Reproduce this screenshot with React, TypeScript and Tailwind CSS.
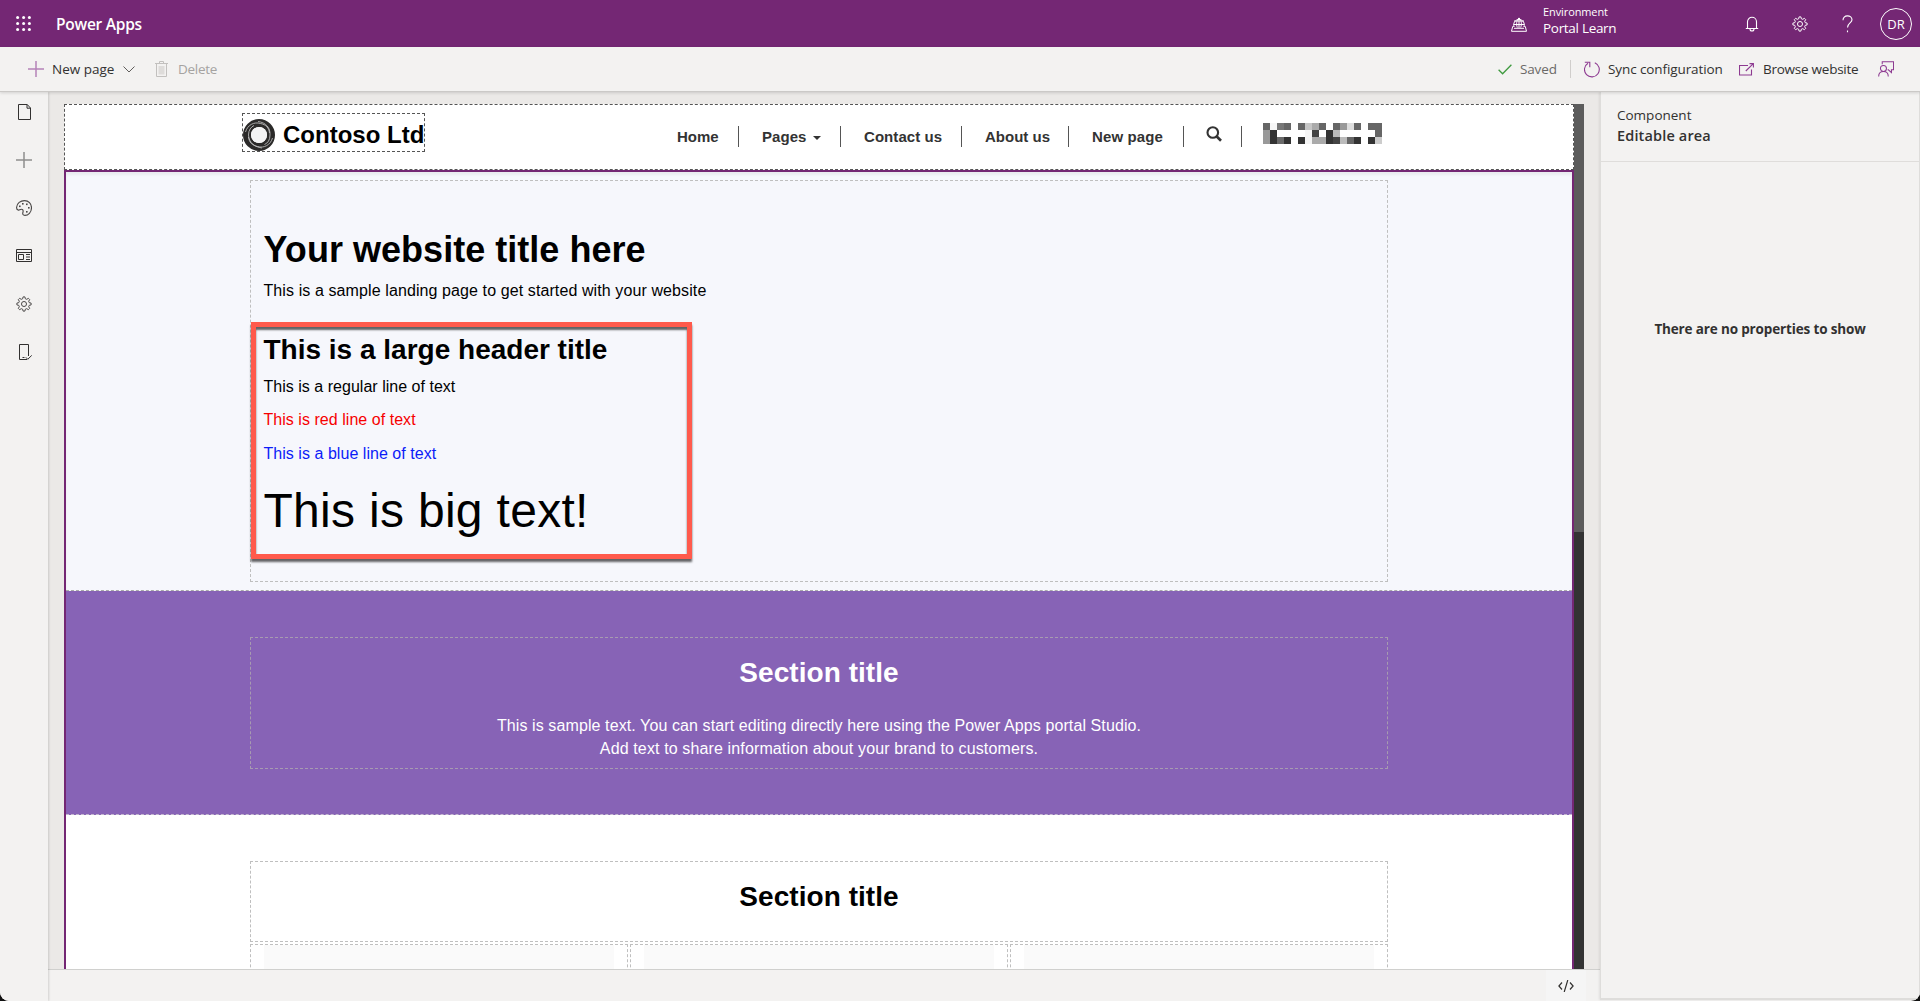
import React from "react";

const GEAR =
  "M9 1.2h2l.5 2.1 1.5.6 1.9-1.1 1.4 1.4-1.1 1.9.6 1.5 2.1.5v2l-2.1.5-.6 1.5 1.1 1.9-1.4 1.4-1.9-1.1-1.5.6-.5 2.1H9l-.5-2.1-1.5-.6-1.9 1.1-1.4-1.4 1.1-1.9-.6-1.5-2.1-.5v-2l2.1-.5.6-1.5-1.1-1.9 1.4-1.4 1.9 1.1 1.5-.6z";

function Gear({ className }: { className?: string }) {
  return (
    <svg viewBox="0 0 20 20" className={className} fill="none" stroke="currentColor" strokeWidth="1.1" strokeLinejoin="round">
      <path d={GEAR} transform="translate(0 .9)" />
      <circle cx="10" cy="10" r="2.800" />
    </svg>
  );
}

function TopBar() {
  return (
    <header className="flex h-[47px] shrink-0 items-center bg-[#742774] text-white">
      <svg className="ml-4 size-[15px] shrink-0" viewBox="0 0 15 15" fill="white">
        {[1.6, 7.6, 13.4].map((y) =>
          [1.6, 7.6, 13.4].map((x) => <circle key={`${x}-${y}`} cx={x} cy={y} r="1.5" />)
        )}
      </svg>
      <div className="ml-[25px] w-[120px] pt-[3px] text-[15.5px] font-semibold tracking-[-0.25px]">Power Apps</div>
      <div className="flex-1" />
      <svg className="mt-px mr-4 h-[15px] w-4" viewBox="0 0 16 15" fill="none" stroke="white">
        <path d="M3.200 10A5.300 5.300 0 1 1 12.800 10M3 4h10M2.500 7.500h11M8 .800v10M6.300 10.500C5.200 7.500 5.200 3.500 8 1c2.800 2.500 2.800 6.500 1.700 9.500" />
        <path d="M2.700 9.500h-1L.500 14.300h15l-1.200-4.800h-1M3 11.300h10" />
      </svg>
      <div className="flex h-[47px] w-[202px] flex-col pt-[4px]">
        <span className="h-[16px] text-[11px] leading-[16px] tracking-[-0.1px]">Environment</span>
        <span className="h-[17px] text-[13.5px] leading-[17px] tracking-[-0.3px]">Portal Learn</span>
      </div>
      <svg className="mt-px h-[16px] w-[14px]" viewBox="0 0 14 16" fill="none" stroke="white" strokeWidth="1.100">
        <path d="M.8 12.500h12.400M2.500 12.500V5.800a4.500 4.500 0 0 1 9 0v6.700M5 13a2 2 0 0 0 4 0" />
      </svg>
      <Gear className="ml-[32px] size-[18px]" />
      <svg className="ml-[33px] h-[18px] w-[11px]" viewBox="0 0 11 18" fill="none" stroke="white" strokeWidth="1.100">
        <path d="M1 5.200C1 2.600 2.800.9 5.400.9S10 2.600 10 4.800c0 3-4.500 3.400-4.500 7.700M5.500 15.500v1.700" />
      </svg>
      <div className="mr-2 ml-[27px] flex size-8 items-center justify-center rounded-full border border-white pt-[3px] text-[13px]">
        DR
      </div>
    </header>
  );
}

function CommandBar() {
  return (
    <div className="relative z-20 flex h-[45px] shrink-0 items-center border-b border-[#cbc9c7] bg-[#f3f2f1] text-[13.500px] text-[#323130] shadow-[0_1px_3px_rgba(0,0,0,0.14)]">
      <svg className="ml-[28px] size-4" viewBox="0 0 16 16" stroke="#b583b8" strokeWidth="1.500">
        <path d="M8 0v16M0 8h16" />
      </svg>
      <span className="ml-2 w-[71px] whitespace-nowrap">New page</span>
      <svg className="h-[7px] w-3" viewBox="0 0 12 7" fill="none" stroke="#605e5c">
        <path d="M.5.500 6 6l5.500-5.500" />
      </svg>
      <svg className="ml-5 h-4 w-[13px]" viewBox="0 0 13 16" fill="none" stroke="#c2c0be">
        <path d="M0 2.500h13M4.500 2.500v-2h4v2M1.500 2.500v13h10v-13" />
        <path d="M3.500 5h6v8.500h-6z" fill="#dedcda" stroke="none" />
      </svg>
      <span className="ml-[10px] tracking-[-0.28px] text-[#a5a3a1]">Delete</span>
      <div className="flex-1" />
      <svg className="h-[11px] w-[14px]" viewBox="0 0 14 11" fill="none" stroke="#3f9a3f" strokeWidth="1.300">
        <path d="m.6 5.800 4 4L13.400.800" />
      </svg>
      <span className="ml-2 w-[50px] tracking-[-0.15px] text-[#6b6967]">Saved</span>
      <div className="h-[18px] w-px bg-[#d0cecc]" />
      <svg className="ml-[13px] h-[17px] w-4" viewBox="0 0 16 17" fill="none" stroke="#8d3a91" strokeWidth="1.100">
        <path d="M10.800 1.700A7.400 7.400 0 1 1 4 2.200M.8 1.200h5v5" />
      </svg>
      <span className="ml-2 w-[131px] tracking-[-0.1px] whitespace-nowrap">Sync configuration</span>
      <svg className="h-[13px] w-[15px]" viewBox="0 0 15 13" fill="none" stroke="#8d3a91" strokeWidth="1.100">
        <path d="M9 2.500H.5v9.500h12V6.500M6.800 8 14.300.600M10.500.600h3.900v3.900" />
      </svg>
      <span className="ml-[9px] w-[115px] tracking-[-0.25px] whitespace-nowrap">Browse website</span>
      <svg className="mr-[26px] h-[16px] w-[16px]" viewBox="0 0 17 17" fill="none" stroke="#8d3a91" strokeWidth="1.100">
        <path d="M4.500 3.500V.800h12v8.500h-2.200v3L11 9.300h-.8" />
        <circle cx="5.800" cy="8" r="3.200" />
        <path d="M.7 16.500c0-3.200 2.200-5.300 5.100-5.300s5.100 2.100 5.100 5.300" />
      </svg>
    </div>
  );
}

function Rail() {
  return (
    <nav className="z-10 flex w-12 shrink-0 flex-col items-center bg-[#f3f2f1] pt-3 text-[#323130] shadow-[1px_0_2px_rgba(0,0,0,0.14)]">
      <svg className="h-4 w-[13px]" viewBox="0 0 13 16" fill="none" stroke="currentColor">
        <path d="M.5.500h8.700l3.300 3.500v11.500H.500zM9 .500v3.700h3.500" />
      </svg>
      <svg className="mt-8 size-4" viewBox="0 0 16 16" stroke="#8f8e8d" strokeWidth="1.500">
        <path d="M8 0v16M0 8h16" />
      </svg>
      <svg className="mt-8 size-4" viewBox="0 0 16 16" fill="none" stroke="#4a4847" strokeWidth="1.100">
        <path d="M8.500.600c4 0 7 3 7 7.200 0 4.500-3.300 7.600-6.600 7.600-1.900 0-2.500-1.300-2-2.900.6-2-.1-3.300-1.500-3.300-1.500 0-2 1.300-3.300.9C.9 9.700.5 8.500.6 7.200.9 3.300 4.500.600 8.500.600z" />
        <g fill="#4a4847" stroke="none">
          <rect x="3" y="5.500" width="1.600" height="1.600" />
          <rect x="6" y="3" width="1.600" height="1.600" />
          <rect x="10" y="3.500" width="1.600" height="1.600" />
          <rect x="12" y="7" width="1.600" height="1.600" />
          <rect x="10" y="11" width="1.600" height="1.600" />
        </g>
      </svg>
      <svg className="mt-[33px] h-[13px] w-4" viewBox="0 0 16 13" fill="none" stroke="#323130">
        <path d="M.500.500h15v12H.500zM.500 3.500h15M2.500 5.500h5v5h-5zM10 5.500h4M10 8h4M10 10.500h4" />
      </svg>
      <Gear className="mt-[33px] size-[18px] text-[#4a4847]" />
      <svg className="mt-[31px] ml-[3px] h-4 w-[13px]" viewBox="0 0 13 16" fill="none" stroke="currentColor">
        <path d="M8 15.500H.500V.500h9V12M3.500 13.500h2M6.800 13.300l2 2 4-4" />
      </svg>
    </nav>
  );
}

const MOSAIC = [
  "666 f6f6f6 777 666 fff 666 c6c6c6 aaa 666 fff 666 999 ddd 666 fff 666 666",
  "999 333 fff fff fff fff f6f6f6 444 fff 333 bbb fff fff fff fff fff 666",
  "999 333 6a6a6a 333 fff 333 f4f4f4 aaa aaa 333 444 bbb 666 333 fff 333 ccc",
]
  .join(" ")
  .split(" ");

const NAV_ITEM = "flex h-[21px] shrink-0 items-center border-r border-[#555] pt-px whitespace-nowrap";

function SiteHeader() {
  return (
    <div className="flex h-[66px] shrink-0 border border-dashed border-[#555] bg-white">
      <div className="mt-2 ml-[177px] flex h-[39px] w-[183px] shrink-0 items-center border border-dashed border-[#555]">
        <svg className="mt-[5px] size-8 shrink-0" viewBox="0 0 32 32" fill="none" stroke="#2b2a29">
          <circle cx="16" cy="16" r="12" strokeWidth="8" />
          <circle cx="16" cy="16" r="8" fill="#f3f3f3" stroke="none" />
          <g stroke="#c9c9c9" strokeWidth=".8">
            <path d="M2.500 13C4.500 6 11 2.500 17.500 4.500 23 5.500 26 9 26.500 14" />
            <path d="M29.500 19C27.500 26 21 29.500 14.500 27.500 9 26.500 6 23 5.500 18" />
            <path d="M19 29C12 28 6 24 5.500 16 5.500 11 8 8 11 6.500" />
            <path d="M15 2.500C23 3.500 27.500 9 27 16c0 5-2 8-5.500 9.500" />
          </g>
        </svg>
        <span className="ml-[8px] pt-[4px] text-[24px] leading-8 font-bold whitespace-nowrap text-black">Contoso Ltd</span>
      </div>
      <div className="mt-[21px] ml-[252px] flex text-[15px] font-bold text-[#333]">
        <div className={`${NAV_ITEM} w-[62px]`}>Home</div>
        <div className={`${NAV_ITEM} w-[102px] pl-[23px]`}>
          <span className="w-[51px] tracking-[0.06px]">Pages</span>
          <svg className="mt-px h-1 w-2" viewBox="0 0 8 4" fill="#333">
            <path d="M0 0h8L4 4z" />
          </svg>
        </div>
        <div className={`${NAV_ITEM} w-[121px] pl-[23px] tracking-[0.06px]`}>Contact us</div>
        <div className={`${NAV_ITEM} w-[107px] pl-[23px]`}>About us</div>
        <div className={`${NAV_ITEM} w-[115px] pl-[23px] tracking-[0.12px]`}>New page</div>
        <div className={`${NAV_ITEM} w-[58px] pl-[22px]`}>
          <svg className="mb-[6px] size-[16px]" viewBox="0 0 16 16" fill="none" stroke="#333" strokeWidth="2.100">
            <circle cx="6.800" cy="6.500" r="5.300" />
            <path d="m10.500 10.300 4.500 4.500" strokeWidth="2.700" />
          </svg>
        </div>
        <div className="-mt-[3px] ml-[21px] grid h-[21px] w-[119px] grid-cols-[repeat(17,7px)] grid-rows-[repeat(3,7px)]">
          {MOSAIC.map((c, i) => (
            <div key={i} style={{ background: `#${c}` }} />
          ))}
        </div>
      </div>
    </div>
  );
}

const BOX = "mx-auto w-[1138px] border border-dashed border-[#bfbfbf]";
const BODY = "h-6 text-base leading-6";

function Site() {
  return (
    <div className="flex w-[1510px] shrink-0 flex-col overflow-hidden font-['Liberation_Sans',Arial,sans-serif] text-black">
      <SiteHeader />
      <div className="flex min-h-0 flex-1 flex-col overflow-hidden border-x-2 border-t-2 border-[#742774] bg-white">
        <section className="h-[419px] shrink-0 border-b border-dashed border-[#aaa] bg-[#f6f7fc] pt-2 shadow-[inset_0_3px_3px_rgba(0,0,0,0.05)]">
          <div className={`${BOX} relative h-[402px] pt-[47px] pl-[12.500px]`}>
            <h1 className="h-[44px] text-[36px] leading-[44px] font-bold tracking-[0.03px]">Your website title here</h1>
            <p className={`${BODY} mt-[7px] tracking-[0.1px]`}>This is a sample landing page to get started with your website</p>
            <h2 className="mt-[30px] h-[34px] text-[28px] leading-[34px] font-bold">This is a large header title</h2>
            <p className={`${BODY} mt-[8px] tracking-[0.02px]`}>This is a regular line of text</p>
            <p className={`${BODY} mt-[9px] tracking-[0.04px] text-[#f60000]`}>This is red line of text</p>
            <p className={`${BODY} mt-[10px] tracking-[0.04px] text-[#0c1cf8]`}>This is a blue line of text</p>
            <p className="mt-[16px] h-[58px] text-[48px] leading-[58px] tracking-[0.3px]">This is big text!</p>
            <div className="absolute top-[141px] left-0 h-[237px] w-[441px] border-[5px] border-[#ff5a4c] shadow-[0_3px_2px_rgba(0,0,0,0.6),inset_0_3px_2px_rgba(0,0,0,0.6)]" />
          </div>
        </section>
        <section className="h-[224px] shrink-0 border-b border-dashed border-[#c4b8cf] bg-[#8763b6] pt-[46px] text-center text-white">
          <div className="mx-auto h-[132px] w-[1138px] border border-dashed border-[#a79bb0] pt-[18px]">
            <h2 className="h-[34px] text-[28px] leading-[34px] font-bold tracking-[0.05px]">Section title</h2>
            <p className="mt-[24px] text-base leading-[23px] tracking-[0.1px]">
              This is sample text. You can start editing directly here using the Power Apps portal Studio.
              <br />
              <span className="tracking-[0.13px]">Add text to share information about your brand to customers.</span>
            </p>
          </div>
        </section>
        <section className="pt-[46px]">
          <div className={`${BOX} h-[81px] pt-[18px] text-center`}>
            <h2 className="h-[34px] text-[28px] leading-[34px] font-bold tracking-[0.05px]">Section title</h2>
          </div>
          <div className="mx-auto mt-[2px] flex w-[1138px] gap-[2px]">
            {[0, 1, 2].map((i) => (
              <div key={i} className="h-[120px] flex-1 border border-dashed border-[#bfbfbf] px-[13px]">
                <div className="h-full bg-[#fafafa]" />
              </div>
            ))}
          </div>
        </section>
      </div>
    </div>
  );
}

function PropertiesPane() {
  return (
    <aside className="mb-px flex w-[320px] shrink-0 flex-col border-x border-b-2 border-[#dedddb] bg-[#f3f2f1] shadow-[-1px_0_2px_rgba(0,0,0,0.08)]">
      <div className="h-[70px] border-b border-[#dfdddb] pt-[13px] pl-4 text-[#323130]">
        <div className="h-5 text-[13.500px] leading-5">Component</div>
        <div className="mt-px h-5 text-[14.500px] leading-5 font-semibold tracking-[0.15px]">Editable area</div>
      </div>
      <div className="mt-[157px] text-center text-[13.500px] leading-5 font-bold tracking-[-0.15px] text-[#323130]">
        There are no properties to show
      </div>
    </aside>
  );
}

export default function App() {
  return (
    <div className="h-[1001px] w-[1920px] overflow-hidden bg-[#111]">
      <div className="flex h-full flex-col overflow-hidden rounded-b-[9px] bg-[#f3f2f1] font-['Open_Sans','Noto_Sans',sans-serif]">
        <TopBar />
        <CommandBar />
        <div className="flex min-h-0 flex-1">
          <Rail />
          <main className="flex w-[1552px] shrink-0 flex-col">
            <div className="flex h-[877px] shrink-0 bg-[#ebe9e7] pt-3 pl-4">
              <Site />
              <div className="w-[10px] bg-[#333]">
                <div className="h-[428px] bg-[#5c5c5c]" />
              </div>
            </div>
            <div className="flex flex-1 justify-end border-t border-[#d0d0ce] pr-[14px]">
              <div className="flex w-10 items-center justify-center bg-[#f5f5f5]">
                <svg className="h-3 w-4" viewBox="0 0 16 12" fill="none" stroke="#323130" strokeWidth="1.200">
                  <path d="M4 2.500.900 6 4 9.500M12 2.500 15.100 6 12 9.500M9.800 0 6.200 12" />
                </svg>
              </div>
            </div>
          </main>
          <PropertiesPane />
        </div>
      </div>
    </div>
  );
}
